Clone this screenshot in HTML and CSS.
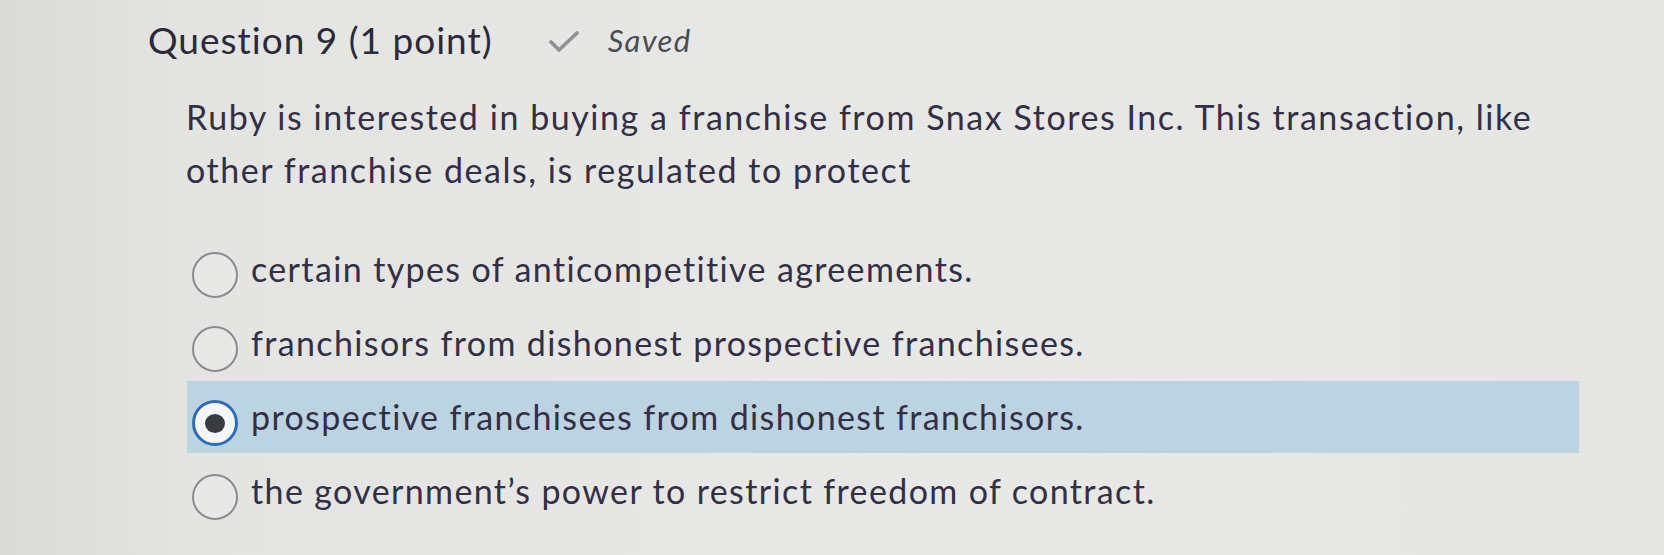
FILE: index.html
```html
<!DOCTYPE html>
<html lang="en">
<head>
<meta charset="utf-8">
<title>Question 9</title>
<link rel="stylesheet" href="styles.css">
</head>
<body>
<main class="page">
  <header class="q-head">
    <h2 class="q-title">Question 9 (1 point)</h2>
    <span class="q-status">
      <svg class="check" width="30" height="22" viewBox="0 0 30 22" aria-hidden="true">
        <polyline points="2,11 10,19 28,2" fill="none" stroke="#8f9295" stroke-width="3.6" stroke-linecap="round" stroke-linejoin="round"/>
      </svg>
      <span class="saved">Saved</span>
    </span>
  </header>
  <p class="q-text">Ruby is interested in buying a franchise from Snax Stores Inc. This transaction, like other franchise deals, is regulated to protect</p>
  <ul class="options">
    <li class="opt"><span class="radio"></span><span class="label">certain types of anticompetitive agreements.</span></li>
    <li class="opt"><span class="radio"></span><span class="label">franchisors from dishonest prospective franchisees.</span></li>
    <li class="opt opt-selected"><span class="radio radio-on"><span class="dot"></span></span><span class="label">prospective franchisees from dishonest franchisors.</span></li>
    <li class="opt"><span class="radio"></span><span class="label">the government’s power to restrict freedom of contract.</span></li>
  </ul>
</main>
</body>
</html>
```

FILE: styles.css
```css
html, body {
  margin: 0;
  padding: 0;
}
body {
  width: 1664px;
  height: 555px;
  overflow: hidden;
  background: linear-gradient(90deg, #dadad8 0%, #e4e4e2 12%, #e8e8e6 60%, #e5e5e3 100%);
  font-family: Lato, "Open Sans", "Liberation Sans", sans-serif;
  font-variant-ligatures: none;
  color: #34313f;
}
.page {
  padding: 18px 0 0 148px;
}
.q-head {
  display: flex;
  align-items: flex-start;
  height: 44px;
}
.q-title {
  margin: 0;
  font-size: 37px;
  font-weight: 400;
  line-height: 44px;
  color: #2c2939;
  letter-spacing: 1px;
}
.q-status {
  display: flex;
  align-items: flex-start;
  margin-left: 56px;
}
.check {
  margin-top: 13px;
}
.saved {
  margin-left: 29px;
  font-style: italic;
  font-size: 31px;
  line-height: 44px;
  letter-spacing: 1.3px;
  color: #4a4d52;
}
.q-text {
  margin: 28px 0 0 38px;
  width: 1375px;
  font-size: 34px;
  line-height: 53px;
  letter-spacing: 1.55px;
  color: #332f45;
}
.options {
  list-style: none;
  margin: 37px 0 0 39px;
  padding: 0;
  display: flex;
  flex-direction: column;
  gap: 2px;
}
.opt {
  display: flex;
  align-items: flex-start;
  height: 72px;
  width: 1392px;
  padding-left: 5px;
  box-sizing: border-box;
}
.opt-selected {
  background: #bcd3e1;
}
.radio {
  flex: none;
  width: 46px;
  height: 46px;
  box-sizing: border-box;
  border: 2px solid #8c8c8e;
  border-radius: 50%;
  margin-top: 19px;
  background: #e8e8e6;
  display: flex;
  align-items: center;
  justify-content: center;
}
.radio-on {
  border: 3px solid #2e6db5;
  background: #f4f6f8;
}
.dot {
  width: 20px;
  height: 19px;
  border-radius: 50%;
  background: #3a3b3d;
}
.label {
  margin-left: 13px;
  margin-top: 16px;
  font-size: 34px;
  line-height: 40px;
  letter-spacing: 1.37px;
  color: #332f45;
}
```
